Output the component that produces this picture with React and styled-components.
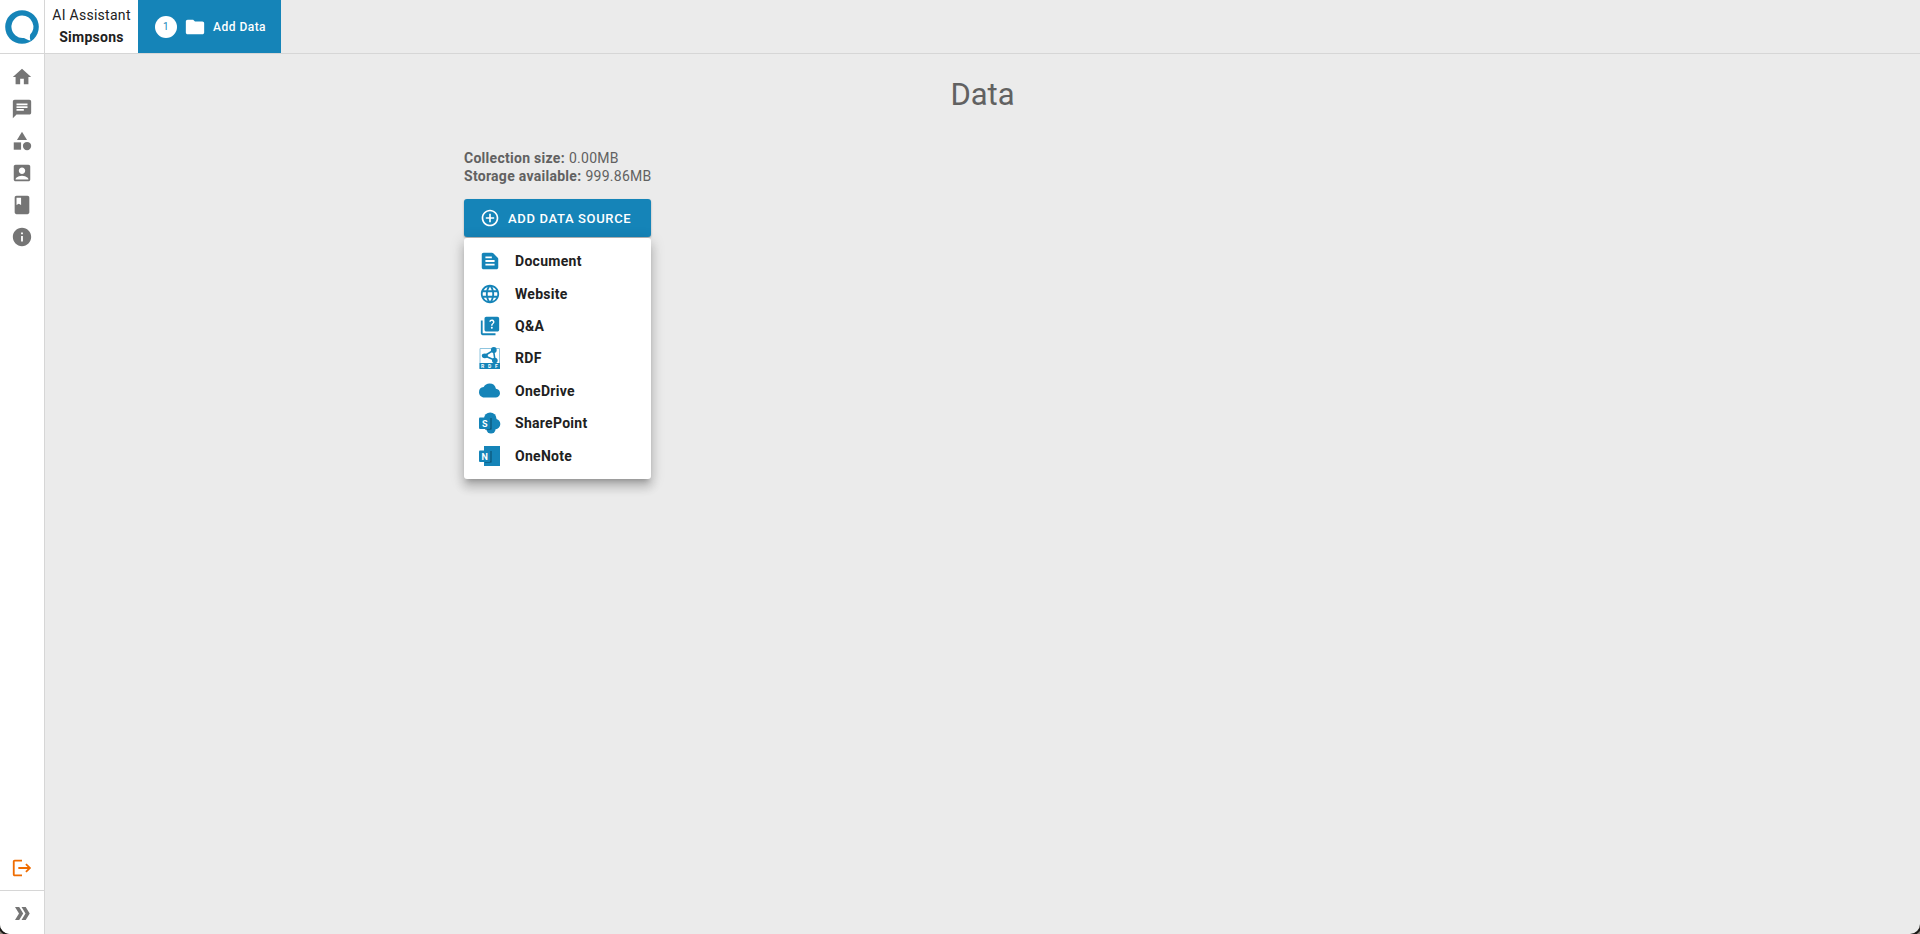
import React from "react";
import styled, { createGlobalStyle, ThemeProvider } from "styled-components";
import {
  MdHome,
  MdChat,
  MdCategory,
  MdAccountBox,
  MdBook,
  MdInfo,
  MdLogout,
  MdFolder,
  MdControlPoint,
  MdTextSnippet,
  MdLanguage,
  MdQuiz,
  MdCloud,
} from "react-icons/md";

const theme = {
  blue: "#1584b8",
  deepBlue: "#0b4a68",
  grey: "#757575",
  text: "#616161",
  ink: "#212121",
  line: "#d6d6d6",
  page: "#ebebeb",
  orange: "#ef6c00",
};

const GlobalStyle = createGlobalStyle`
  *, *::before, *::after { box-sizing: border-box; }
  body {
    margin: 0;
    background: #8f857c;
    font-family: Roboto, "Liberation Sans", sans-serif;
    font-size: 14px;
    letter-spacing: 0.02em;
    color: ${theme.text};
  }
  svg { display: block; flex: none; }
`;

const Shell = styled.div`
  display: grid;
  grid-template-columns: 45px 1fr;
  grid-template-rows: 54px 1fr;
  min-height: 100vh;
  overflow: hidden;
  border-radius: 0 0 10px 10px;
  box-shadow: 0 0 0 2px #1c1a18;
  background: ${(p) => p.theme.page};
`;

const LogoLink = styled.a`
  display: flex;
  align-items: center;
  justify-content: center;
  background: #fff;
  border-right: 1px solid ${(p) => p.theme.line};
  border-bottom: 1px solid ${(p) => p.theme.line};
`;

const TopBar = styled.header`
  display: flex;
  border-bottom: 1px solid ${(p) => p.theme.line};
`;

const ProjectName = styled.div`
  width: 93px;
  display: flex;
  flex-direction: column;
  align-items: center;
  padding-top: 4px;
  background: #fff;
  color: ${(p) => p.theme.ink};
  line-height: 22px;
  white-space: nowrap;
`;

const StepTab = styled.button`
  display: flex;
  align-items: center;
  gap: 7px;
  width: 143px;
  padding: 0 0 0 17px;
  border: 0;
  background: ${(p) => p.theme.blue};
  color: #fff;
  font: 500 12px Roboto, sans-serif;
  letter-spacing: 0.04em;
  white-space: nowrap;
  cursor: pointer;
`;

const StepNumber = styled.span`
  width: 22px;
  height: 22px;
  border-radius: 50%;
  background: #fff;
  color: ${(p) => p.theme.blue};
  font-size: 10px;
  font-weight: 400;
  line-height: 22px;
  text-align: center;
`;

const SideBar = styled.nav`
  display: flex;
  flex-direction: column;
  padding-top: 7px;
  background: #fff;
  border-right: 1px solid ${(p) => p.theme.line};
`;

const SideLink = styled.a`
  display: flex;
  align-items: center;
  justify-content: center;
  height: 32px;
  color: ${(p) => p.theme.grey};
`;

const SideFooter = styled.div`
  margin-top: auto;
`;

const LogoutButton = styled.button`
  display: flex;
  align-items: center;
  justify-content: center;
  width: 100%;
  height: 44px;
  padding: 0;
  border: 0;
  background: none;
  color: ${(p) => p.theme.orange};
  cursor: pointer;
`;

const ExpandButton = styled(LogoutButton)`
  border-top: 1px solid ${(p) => p.theme.line};
  color: ${(p) => p.theme.grey};
`;

const Main = styled.main`
  padding: 20px 16px;
`;

const Title = styled.h1`
  margin: 0;
  font-size: 31px;
  font-weight: 400;
  letter-spacing: 0;
  line-height: 42px;
  text-align: center;
`;

const Content = styled.section`
  max-width: 1037px;
  margin: 33px auto 0;
`;

const Stats = styled.dl`
  margin: 0 0 14px;
  line-height: 18px;
`;

const Stat = styled.div`
  display: flex;
  gap: 4px;
  dt { font-weight: 700; }
  dd { margin: 0; }
`;

const DropDown = styled.div`
  position: relative;
  width: 187px;
`;

const AddButton = styled.button`
  display: flex;
  align-items: center;
  gap: 8px;
  width: 100%;
  height: 38px;
  padding: 0 16px;
  border: 0;
  border-radius: 3px;
  background: ${(p) => p.theme.blue};
  box-shadow: 0 1px 2px rgba(0, 0, 0, 0.3);
  color: #fff;
  font: 500 13px Roboto, sans-serif;
  letter-spacing: 0.05em;
  white-space: nowrap;
  cursor: pointer;
`;

const Menu = styled.ul`
  position: absolute;
  top: 100%;
  left: 0;
  width: 100%;
  height: 241px;
  display: grid;
  grid-auto-rows: 1fr;
  margin: 1px 0 0;
  padding: 7px 0;
  list-style: none;
  background: #fff;
  border-radius: 3px;
  box-shadow: 0 5px 5px -3px rgba(0, 0, 0, 0.2), 0 8px 10px 1px rgba(0, 0, 0, 0.14),
    0 3px 14px 2px rgba(0, 0, 0, 0.12);
`;

const MenuButton = styled.button`
  display: grid;
  grid-template-columns: 22px 1fr;
  align-items: center;
  justify-items: start;
  gap: 14px;
  width: 100%;
  height: 100%;
  padding: 0 15px;
  border: 0;
  background: none;
  color: ${(p) => p.theme.ink};
  font: 700 14px Roboto, sans-serif;
  letter-spacing: 0.02em;
  text-align: left;
  cursor: pointer;
  svg { color: ${(p) => p.theme.blue}; }
`;

const Logo = () => (
  <svg width="34" height="34" viewBox="0 0 34 34" aria-hidden="true">
    <circle cx="17" cy="17" r="16.8" fill={theme.blue} />
    <path
      d="M17 5.6A11.200 11.200 0 1 0 19 27.900C21 29 23 30 25.500 30.600C24.800 28.500 24.700 26.500 25.200 24.500A11.200 11.200 0 0 0 17 5.600z"
      fill="#fff"
    />
  </svg>
);

const DoubleChevron = () => (
  <svg width="22" height="22" viewBox="0 0 22 22" fill="currentColor" aria-hidden="true">
    <path d="M4 5h4.200l4 6.500-4 6.500H4l4-6.500z" />
    <path d="M10.500 5h4.200l4 6.500-4 6.500h-4.200l4-6.500z" />
  </svg>
);

const RdfIcon = () => (
  <svg width="22" height="22" viewBox="0 0 22 22" aria-hidden="true">
    <path d="M1 1.500h19.500v20H1z" fill="#fff" stroke="#8fc5df" />
    <path d="M0.500 16h20.500v6H0.500z" fill={theme.blue} />
    <path d="M5.500 8.800 14.500 3.200 16 13.200z" fill="none" stroke={theme.blue} strokeWidth="1.6" />
    <g fill={theme.blue}>
      <ellipse cx="5.800" cy="8.800" rx="3" ry="2.400" />
      <circle cx="14.800" cy="3" r="2.900" />
      <circle cx="15.800" cy="13.500" r="2.800" />
    </g>
    <g fill="#fff" fontFamily="Roboto, sans-serif" fontSize="5" fontWeight="700" letterSpacing="0">
      <text x="2" y="20.800">R</text>
      <text x="9" y="20.800">D</text>
      <text x="16" y="20.800">F</text>
    </g>
  </svg>
);

const OneDriveIcon = () => <MdCloud size={21} />;

const AppBadge = ({ letter }) => (
  <>
    <path d="M6 6h6.500v11.500H6z" fill={theme.deepBlue} />
    <rect x="0" y="5.500" width="11.500" height="11.500" rx="1" fill={theme.blue} />
    <text
      x="5.700"
      y="14.500"
      textAnchor="middle"
      fill="#fff"
      fontFamily="Roboto, sans-serif"
      fontSize="9"
      fontWeight="700"
      letterSpacing="0"
    >
      {letter}
    </text>
  </>
);

const SharePointIcon = () => (
  <svg width="22" height="22" viewBox="0 0 22 22" aria-hidden="true">
    <g fill={theme.blue}>
      <circle cx="11.200" cy="6.800" r="6.300" />
      <circle cx="16" cy="12" r="5.300" />
      <circle cx="12" cy="17" r="4.600" />
    </g>
    <AppBadge letter="S" />
  </svg>
);

const OneNoteIcon = () => (
  <svg width="22" height="22" viewBox="0 0 22 22" aria-hidden="true">
    <path d="M5 1h16v20H5z" fill={theme.blue} />
    <AppBadge letter="N" />
  </svg>
);

const navigation = [
  { label: "Home", Icon: MdHome },
  { label: "Chat", Icon: MdChat },
  { label: "Categories", Icon: MdCategory },
  { label: "Account", Icon: MdAccountBox },
  { label: "Guide", Icon: MdBook },
  { label: "About", Icon: MdInfo },
];

const sources = [
  { label: "Document", Icon: MdTextSnippet },
  { label: "Website", Icon: MdLanguage },
  { label: "Q&A", Icon: MdQuiz },
  { label: "RDF", Icon: RdfIcon },
  { label: "OneDrive", Icon: OneDriveIcon },
  { label: "SharePoint", Icon: SharePointIcon },
  { label: "OneNote", Icon: OneNoteIcon },
];

export default function App() {
  return (
    <ThemeProvider theme={theme}>
      <GlobalStyle />
      <Shell>
        <LogoLink href="#" aria-label="Start page">
          <Logo />
        </LogoLink>
        <TopBar>
          <ProjectName>
            <span>AI Assistant</span>
            <strong>Simpsons</strong>
          </ProjectName>
          <StepTab type="button">
            <StepNumber>1</StepNumber>
            <MdFolder size={22} />
            <span>Add Data</span>
          </StepTab>
        </TopBar>
        <SideBar aria-label="Main">
          {navigation.map(({ label, Icon }) => (
            <SideLink key={label} href="#" aria-label={label}>
              <Icon size={22} />
            </SideLink>
          ))}
          <SideFooter>
            <LogoutButton type="button" aria-label="Log out">
              <MdLogout size={22} />
            </LogoutButton>
            <ExpandButton type="button" aria-label="Expand menu">
              <DoubleChevron />
            </ExpandButton>
          </SideFooter>
        </SideBar>
        <Main>
          <Title>Data</Title>
          <Content>
            <Stats>
              <Stat>
                <dt>Collection size:</dt>
                <dd>0.00MB</dd>
              </Stat>
              <Stat>
                <dt>Storage available:</dt>
                <dd>999.86MB</dd>
              </Stat>
            </Stats>
            <DropDown>
              <AddButton type="button" aria-haspopup="menu" aria-expanded="true">
                <MdControlPoint size={20} />
                ADD DATA SOURCE
              </AddButton>
              <Menu role="menu">
                {sources.map(({ label, Icon }) => (
                  <li key={label} role="none">
                    <MenuButton type="button" role="menuitem">
                      <Icon size={22} />
                      {label}
                    </MenuButton>
                  </li>
                ))}
              </Menu>
            </DropDown>
          </Content>
        </Main>
      </Shell>
    </ThemeProvider>
  );
}
